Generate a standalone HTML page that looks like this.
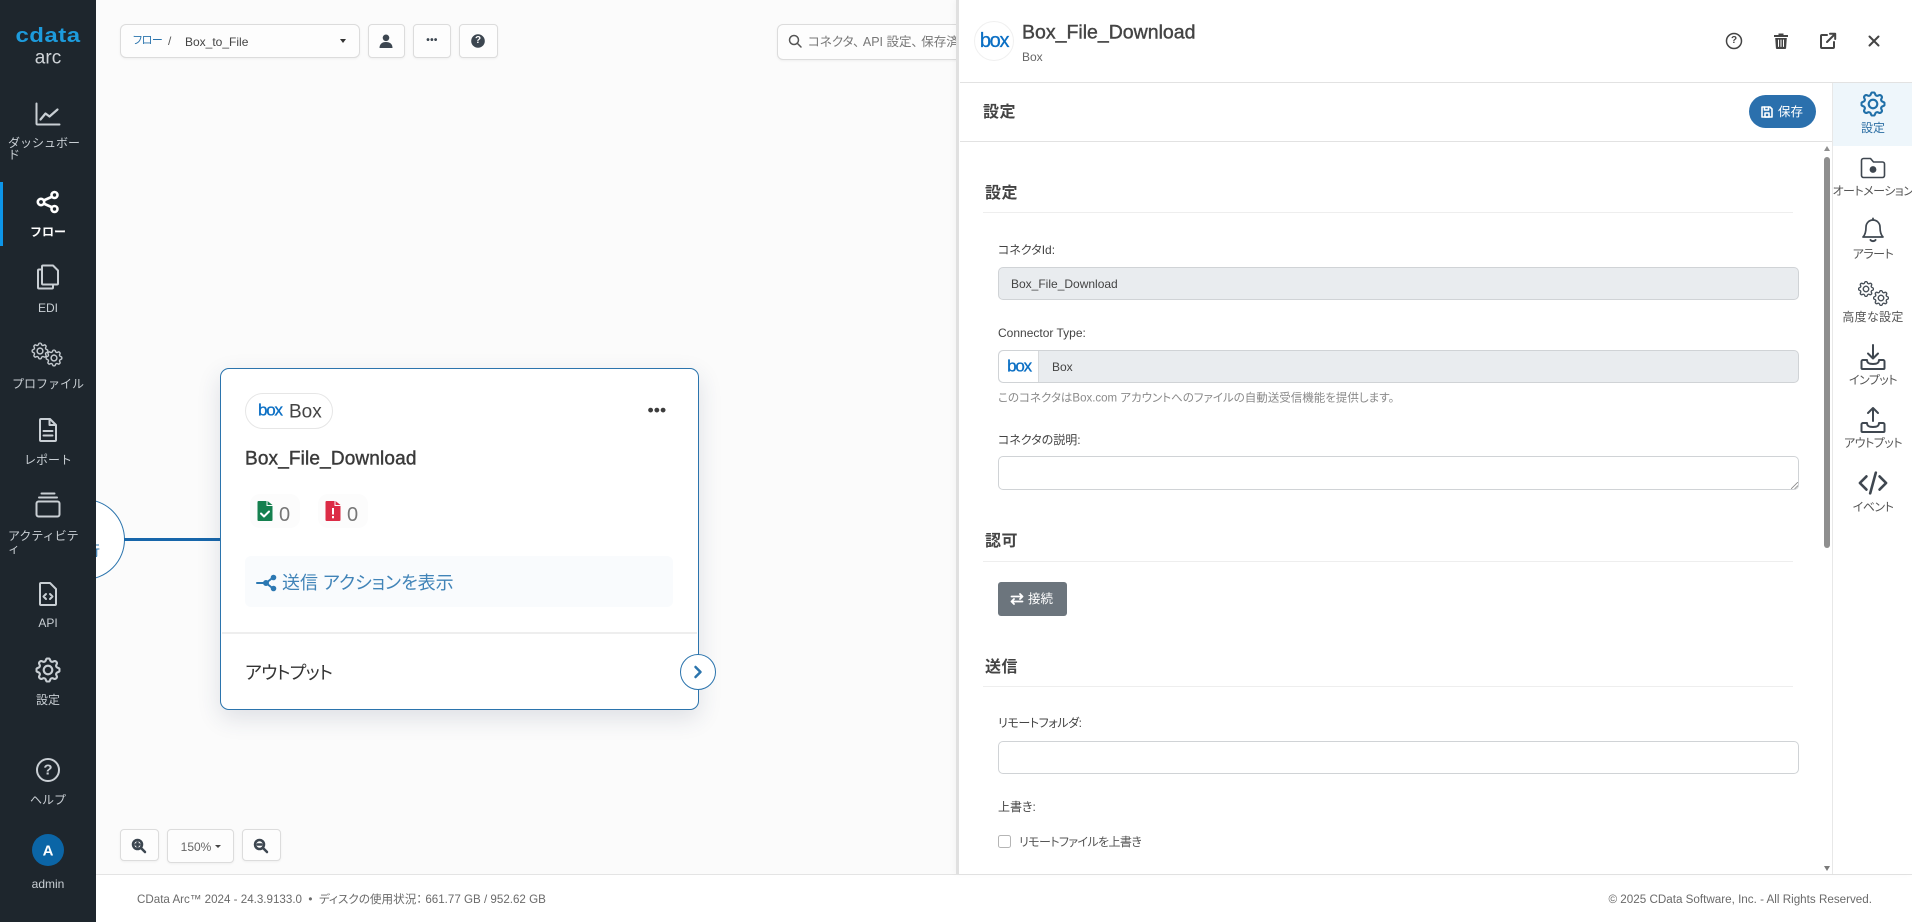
<!DOCTYPE html>
<html lang="ja"><head><meta charset="utf-8"><title>CData Arc</title>
<style>
html,body{margin:0;padding:0;width:1912px;height:922px;overflow:hidden;background:#fbfbfb;font-family:"Liberation Sans","Noto Sans CJK JP",sans-serif;color:#444;font-feature-settings:"palt"}
*{box-sizing:border-box}
.a{position:absolute}
.c{position:absolute;transform:translate(-50%,-50%);white-space:nowrap;line-height:1}
.l{position:absolute;transform:translateY(-50%);white-space:nowrap;line-height:1}
svg.i{position:absolute;transform:translate(-50%,-50%);fill:none;stroke:currentColor;stroke-width:1.5;stroke-linecap:round;stroke-linejoin:round;overflow:visible}
svg.f{fill:currentColor;stroke:none}
#side{left:0;top:0;width:96px;height:922px;background:#1e262d;color:#c9cfd4}
.t{font-size:12px;color:#c9cfd4;font-feature-settings:normal}
.btn{position:absolute;background:#fdfdfd;border:1px solid #dcdcdc;border-radius:4px;box-shadow:0 1px 2px rgba(0,0,0,.05)}
#card{left:220px;top:368px;width:479px;height:342px;background:#fff;border:1.500px solid #2b74ad;border-radius:9px;box-shadow:0 8px 24px rgba(40,60,90,.14)}
.box{font-family:"Liberation Sans",sans-serif;color:#0b6fc4;font-weight:400;letter-spacing:-1.200px;-webkit-text-stroke:.3px #0b6fc4}
.lab{font-size:12px;color:#444}
.sec{font-size:16px;font-weight:700;color:#444;letter-spacing:.5px;font-feature-settings:normal}
.ln{position:absolute;left:983px;width:810px;height:1px;background:#eeeeee}
.inp{position:absolute;left:998px;width:801px;border:1px solid #d0d3d6;border-radius:5px;background:#fff}
.nav{font-size:12px;color:#555;letter-spacing:-.5px}
</style></head><body>
<svg width="0" height="0" style="position:absolute">
<symbol id="gear" viewBox="0 0 16 16"><path fill="currentColor" stroke="currentColor" stroke-width=".35" d="M8 4.754a3.246 3.246 0 1 0 0 6.492 3.246 3.246 0 0 0 0-6.492zM5.754 8a2.246 2.246 0 1 1 4.492 0 2.246 2.246 0 0 1-4.492 0z"/><path fill="currentColor" stroke="currentColor" stroke-width=".35" d="M9.796 1.343c-.527-1.79-3.065-1.79-3.592 0l-.094.319a.873.873 0 0 1-1.255.52l-.292-.16c-1.64-.892-3.433.902-2.54 2.541l.159.292a.873.873 0 0 1-.52 1.255l-.319.094c-1.79.527-1.79 3.065 0 3.592l.319.094a.873.873 0 0 1 .52 1.255l-.16.292c-.892 1.64.901 3.434 2.541 2.54l.292-.159a.873.873 0 0 1 1.255.52l.094.319c.527 1.79 3.065 1.79 3.592 0l.094-.319a.873.873 0 0 1 1.255-.52l.292.16c1.64.893 3.434-.902 2.54-2.541l-.159-.292a.873.873 0 0 1 .52-1.255l.319-.094c1.79-.527 1.79-3.065 0-3.592l-.319-.094a.873.873 0 0 1-.52-1.255l.16-.292c.893-1.64-.902-3.433-2.541-2.54l-.292.159a.873.873 0 0 1-1.255-.52l-.094-.319zm-2.633.283c.246-.835 1.428-.835 1.674 0l.094.319a1.873 1.873 0 0 0 2.693 1.115l.291-.16c.764-.415 1.6.42 1.184 1.185l-.159.292a1.873 1.873 0 0 0 1.116 2.692l.318.094c.835.246.835 1.428 0 1.674l-.319.094a1.873 1.873 0 0 0-1.115 2.693l.16.291c.415.764-.42 1.6-1.185 1.184l-.291-.159a1.873 1.873 0 0 0-2.693 1.116l-.094.318c-.246.835-1.428.835-1.674 0l-.094-.319a1.873 1.873 0 0 0-2.692-1.115l-.292.16c-.764.415-1.6-.42-1.184-1.185l.159-.291A1.873 1.873 0 0 0 1.945 8.93l-.319-.094c-.835-.246-.835-1.428 0-1.674l.319-.094A1.873 1.873 0 0 0 3.06 4.377l-.16-.292c-.415-.764.42-1.6 1.185-1.184l.292.159a1.873 1.873 0 0 0 2.692-1.115l.094-.319z"/></symbol>
</svg>

<!-- Canvas -->
<div class="btn" style="left:120px;top:24px;width:240px;height:34px;border-radius:6px"></div>
<div class="l" style="left:133px;top:41px;font-size:11px;color:#2a74ad;letter-spacing:-.5px">フロー</div>
<div class="l" style="left:168px;top:41px;font-size:12px;color:#555">/</div>
<div class="l" style="left:185px;top:41.500px;font-size:12px;color:#444">Box_to_File</div>
<div class="a" style="left:340px;top:39px;width:0;height:0;border:3.500px solid transparent;border-top:4px solid #333;border-bottom:0"></div>
<div class="btn" style="left:368px;top:24px;width:37px;height:34px"></div>
<svg class="i f" style="left:386px;top:41px;color:#3c4650" width="13" height="14" viewBox="0 0 13 14"><circle cx="6.500" cy="3.800" r="3.300"/><path d="M0 14c0-4 2.500-6 6.500-6s6.500 2 6.500 6z"/></svg>
<div class="btn" style="left:413px;top:24px;width:38px;height:34px"></div>
<div class="c" style="left:432px;top:41px;font-size:10px;font-weight:700;color:#3c4650;letter-spacing:.3px">•••</div>
<div class="btn" style="left:459px;top:24px;width:39px;height:34px"></div>
<svg class="i f" style="left:478px;top:41px;color:#3c4650" width="14" height="14" viewBox="0 0 14 14"><circle cx="7" cy="7" r="6.800"/></svg>
<div class="c" style="left:478px;top:41px;font-size:10px;font-weight:700;color:#fff">?</div>
<div class="btn" style="left:777px;top:24px;width:200px;height:36px;border-radius:6px"></div>
<svg class="i" style="left:795px;top:41px;color:#555" width="13" height="13" viewBox="0 0 13 13"><circle cx="5.500" cy="5.500" r="4.500"/><path d="M9 9l3.500 3.500"/></svg>
<div class="l" style="left:808px;top:42px;font-size:12.500px;color:#777">コネクタ、 API 設定、 保存済み...</div>

<!-- Left partial circle + connector -->
<div class="a" style="left:44px;top:499px;width:81px;height:81px;border:1.500px solid #2b74ad;border-radius:50%;background:#fff"></div>
<div class="l" style="left:86px;top:551px;font-size:14px;color:#2b74ad">行</div>
<div class="a" style="left:124px;top:538px;width:97px;height:3px;background:#1766aa"></div>

<!-- Node card -->
<div id="card" class="a"></div>
<div class="a" style="left:245px;top:393px;width:88px;height:36px;border:1px solid #e6e6e6;border-radius:18px;background:#fff"></div>
<div class="l box" style="left:258px;top:410px;font-size:17px">box</div>
<div class="l" style="left:289px;top:412px;font-size:19px;color:#444">Box</div>
<div class="c" style="left:657px;top:410px;font-size:17px;font-weight:700;color:#3d3d3d;letter-spacing:.3px">•••</div>
<div class="l" style="left:245px;top:459px;font-size:19px;font-weight:400;color:#3a3a3a;letter-spacing:.15px;-webkit-text-stroke:.4px #3a3a3a">Box_File_Download</div>
<div class="a" style="left:250px;top:494px;width:50px;height:34px;background:#fcfcfc;border-radius:10px"></div>
<div class="a" style="left:318px;top:494px;width:50px;height:34px;background:#fcfcfc;border-radius:10px"></div>
<svg class="i f" style="left:264.500px;top:511px;color:#15804f" width="15" height="20" viewBox="0 0 15 20"><path d="M1 0h8v5h6v14a1 1 0 0 1-1 1H1a1 1 0 0 1-1-1V1a1 1 0 0 1 1-1zM10 0l5 4h-5z"/><path d="M3.500 12.500l3 3 5-5" fill="none" stroke="#fff" stroke-width="2"/></svg>
<div class="l" style="left:279px;top:515px;font-size:20px;color:#777">0</div>
<svg class="i f" style="left:332.500px;top:511px;color:#dc2c46" width="15" height="20" viewBox="0 0 15 20"><path d="M1 0h8v5h6v14a1 1 0 0 1-1 1H1a1 1 0 0 1-1-1V1a1 1 0 0 1 1-1zM10 0l5 4h-5z"/><path d="M6.500 7h2v6.500h-2zM6.500 15h2v2.300h-2z" fill="#fff"/></svg>
<div class="l" style="left:347px;top:515px;font-size:20px;color:#777">0</div>
<div class="a" style="left:245px;top:556px;width:428px;height:51px;background:#f9fbfd;border-radius:6px"></div>
<svg class="i" style="left:267px;top:583px;color:#2c78b2;stroke-width:2" width="20" height="16" viewBox="0 0 20 16"><path d="M0 8h9M9 8l7-5.500M9 8l7 5.500"/><circle cx="9" cy="8" r="2" fill="currentColor"/><circle cx="16.500" cy="2.500" r="1.800" fill="currentColor"/><circle cx="16.500" cy="13.500" r="1.800" fill="currentColor"/></svg>
<div class="l" style="left:282px;top:583px;font-size:18px;color:#4184b8">送信 アクションを表示</div>
<div class="a" style="left:222px;top:632px;width:475px;height:1.500px;background:#eeeeee"></div>
<div class="l" style="left:245px;top:673px;font-size:18px;color:#333;letter-spacing:-.7px">アウトプット</div>
<div class="a" style="left:680px;top:654px;width:36px;height:36px;border:1.500px solid #2b74ad;border-radius:50%;background:#fff"></div>
<svg class="i" style="left:698px;top:672px;color:#2b74ad;stroke-width:2.500" width="7" height="12" viewBox="0 0 7 12"><path d="M1 1l5 5-5 5"/></svg>

<!-- Zoom controls -->
<div class="btn" style="left:120px;top:829px;width:39px;height:32px"></div>
<svg class="i" style="left:139px;top:846px;color:#3c4650;stroke-width:2.500" width="14" height="14" viewBox="0 0 14 14"><circle cx="5.500" cy="5.500" r="4.500"/><path d="M9 9l4 4M3.500 5.500h4M5.500 3.500v4" /></svg>
<div class="btn" style="left:167px;top:829px;width:67px;height:34px"></div>
<div class="c" style="left:196px;top:846.500px;font-size:12px;color:#666">150%</div>
<div class="a" style="left:215px;top:845px;width:0;height:0;border:3px solid transparent;border-top:3.500px solid #444;border-bottom:0"></div>
<div class="btn" style="left:242px;top:829px;width:39px;height:32px"></div>
<svg class="i" style="left:261px;top:846px;color:#3c4650;stroke-width:2.500" width="14" height="14" viewBox="0 0 14 14"><circle cx="5.500" cy="5.500" r="4.500"/><path d="M9 9l4 4M3.500 5.500h4"/></svg>

<!-- Footer -->
<div class="a" style="left:96px;top:874px;width:1816px;height:48px;background:#fff;border-top:1px solid #e4e4e4"></div>
<div class="l" style="left:137px;top:899.500px;font-size:11.600px;color:#6a6a6a">CData Arc™ 2024 - 24.3.9133.0 &nbsp;•&nbsp; ディスクの使用状況： 661.77 GB / 952.62 GB</div>
<div class="l" style="right:40px;top:899.500px;font-size:11.650px;color:#6a6a6a">© 2025 CData Software, Inc. - All Rights Reserved.</div>

<!-- Side panel -->
<div class="a" style="left:956px;top:0;width:956px;height:874px;background:#fff;border-left:3px solid #e0e0e0;box-shadow:-2px 0 6px rgba(0,0,0,.03)"></div>
<div class="a" style="left:974px;top:21px;width:40px;height:40px;border-radius:50%;background:#fff;border:1px solid #f0f0f0"></div>
<div class="c box" style="left:994px;top:41px;font-size:20px;letter-spacing:-1.300px">box</div>
<div class="l" style="left:1022px;top:33px;font-size:19.500px;color:#444;-webkit-text-stroke:.4px #444">Box_File_Download</div>
<div class="l" style="left:1022px;top:57px;font-size:12px;color:#666">Box</div>
<svg class="i" style="left:1734px;top:41px;color:#444" width="16" height="16" viewBox="0 0 16 16"><circle cx="8" cy="8" r="7.500"/></svg>
<div class="c" style="left:1734px;top:41px;font-size:10px;font-weight:700;color:#444">?</div>
<svg class="i f" style="left:1781px;top:41px;color:#444" width="14" height="16" viewBox="0 0 14 16"><path d="M0 2h4.500V.5h5V2H14v2H0zM1.200 5h11.600l-.7 10a1 1 0 0 1-1 1H2.900a1 1 0 0 1-1-1z"/><path d="M4.500 7v6.500M7 7v6.500M9.500 7v6.500" fill="none" stroke="#fff" stroke-width="1"/></svg>
<svg class="i" style="left:1828px;top:41px;color:#444;stroke-width:2" width="16" height="16" viewBox="0 0 16 16"><path d="M7 2H2a1 1 0 0 0-1 1v11a1 1 0 0 0 1 1h11a1 1 0 0 0 1-1V9"/><path d="M7 9l8-8M10 .800h5.200V6"/></svg>
<svg class="i" style="left:1874px;top:41px;color:#444;stroke-width:2" width="10" height="10" viewBox="0 0 10 10"><path d="M.500.500l9 9M9.500.500l-9 9"/></svg>
<div class="a" style="left:960px;top:82px;width:952px;height:1px;background:#e2e2e2"></div>
<div class="a" style="left:960px;top:141px;width:872px;height:1px;background:#e2e2e2"></div>
<div class="l sec" style="left:983px;top:112.500px">設定</div>
<div class="a" style="left:1749px;top:95px;width:67px;height:33px;background:#2b70ad;border-radius:17px"></div>
<svg class="i" style="left:1767px;top:112px;color:#fff;stroke-width:1.600" width="12" height="12" viewBox="0 0 12 12"><path d="M1 1h8l2 2v8H1z"/><path d="M3.500 1v3h4V1M4 7h4v4H4z"/></svg>
<div class="l" style="left:1778px;top:112px;font-size:12.500px;color:#fff">保存</div>

<!-- Right nav -->
<div class="a" style="left:1832px;top:83px;width:1px;height:791px;background:#e8e8e8"></div>
<div class="a" style="left:1833px;top:83px;width:79px;height:63px;background:#eef6fb"></div>
<svg class="i" style="left:1873px;top:104px;color:#1f6fa8" width="25" height="25"><use href="#gear"/></svg>
<div class="c" style="left:1873px;top:128px;font-size:12px;color:#2c6ea3">設定</div>
<svg class="i" style="left:1873px;top:168px;color:#3f4750;stroke-width:1.600" width="25" height="21" viewBox="0 0 25 21"><path d="M1 3a2 2 0 0 1 2-2h7l3 3.500h9a2 2 0 0 1 2 2V18a2 2 0 0 1-2 2H3a2 2 0 0 1-2-2z"/><circle cx="12.500" cy="12" r="2.400" fill="currentColor" stroke-width="2"/></svg>
<div class="c nav" style="left:1873px;top:191px">オートメーション</div>
<svg class="i" style="left:1873px;top:230px;color:#3f4750;stroke-width:1.700" width="22" height="25" viewBox="0 0 22 25"><path d="M11 2.500a7 7 0 0 0-7 7c0 5-1.500 8.500-3 10h20c-1.500-1.500-3-5-3-10a7 7 0 0 0-7-7z"/><path d="M11 .800v1.700"/><path d="M8.500 22.500c1 1.500 4 1.500 5 0" stroke-width="2"/></svg>
<div class="c nav" style="left:1873px;top:254px">アラート</div>
<svg class="i" style="left:1866px;top:289px;color:#3f4750" width="16" height="16"><use href="#gear"/></svg>
<svg class="i" style="left:1881px;top:298px;color:#3f4750" width="16" height="16"><use href="#gear"/></svg>
<div class="c nav" style="left:1873px;top:317px;letter-spacing:.3px">高度な設定</div>
<svg class="i" style="left:1873px;top:357px;color:#3f4750;stroke-width:2" width="26" height="26" viewBox="0 0 26 26"><path d="M13 1v13M8 9.500l5 5 5-5"/><path d="M7 16H3a1.500 1.500 0 0 0-1.500 1.500V24a1 1 0 0 0 1 1h21a1 1 0 0 0 1-1v-6.500A1.500 1.500 0 0 0 23 16h-4M7 16c0 3 2 4 6 4s6-1 6-4"/></svg>
<div class="c nav" style="left:1873px;top:380px">インプット</div>
<svg class="i" style="left:1873px;top:420px;color:#3f4750;stroke-width:2" width="26" height="26" viewBox="0 0 26 26"><path d="M13 14V1M8 6l5-5 5 5"/><path d="M7 16H3a1.500 1.500 0 0 0-1.500 1.500V24a1 1 0 0 0 1 1h21a1 1 0 0 0 1-1v-6.500A1.500 1.500 0 0 0 23 16h-4M7 16c0 3 2 4 6 4s6-1 6-4"/></svg>
<div class="c nav" style="left:1873px;top:443px">アウトプット</div>
<svg class="i" style="left:1873px;top:483px;color:#3f4750;stroke-width:2.800" width="30" height="24" viewBox="0 0 32 24"><path d="M9 5L2 12l7 7M23 5l7 7-7 7M19 1l-6 22"/></svg>
<div class="c nav" style="left:1873px;top:507px">イベント</div>

<!-- Scrollbar -->
<div class="a" style="left:1824px;top:146px;width:0;height:0;border:3.500px solid transparent;border-bottom:5px solid #909090;border-top:0"></div>
<div class="a" style="left:1824px;top:157px;width:6px;height:391px;background:#8f8f8f;border-radius:3px"></div>
<div class="a" style="left:1824px;top:866px;width:0;height:0;border:3.500px solid transparent;border-top:5px solid #7a7a7a;border-bottom:0"></div>

<!-- Form -->
<div class="l sec" style="left:985px;top:194px">設定</div>
<div class="ln" style="top:212px"></div>
<div class="l lab" style="left:998px;top:250px">コネクタId:</div>
<div class="inp" style="top:267px;height:33px;background:#e9ecef"></div>
<div class="l" style="left:1011px;top:284px;font-size:12px;color:#444">Box_File_Download</div>
<div class="l lab" style="left:998px;top:333px">Connector Type:</div>
<div class="inp" style="top:350px;height:33px;background:#e9ecef"></div>
<div class="a" style="left:999px;top:351px;width:40px;height:31px;background:#fff;border-right:1px solid #d8dadc;border-radius:5px 0 0 5px"></div>
<div class="c box" style="left:1019px;top:366px;font-size:17px">box</div>
<div class="l" style="left:1052px;top:367px;font-size:12px;color:#444">Box</div>
<div class="l" style="left:998px;top:399px;font-size:11.500px;color:#8a8a8a">このコネクタはBox.com アカウントへのファイルの自動送受信機能を提供します。</div>
<div class="l lab" style="left:998px;top:440px">コネクタの説明:</div>
<div class="inp" style="top:456px;height:34px"></div>
<svg class="a" style="left:1791px;top:482px" width="7" height="7" viewBox="0 0 7 7" fill="none" stroke="#888" stroke-width=".8"><path d="M0 7l7-7M3.500 7L7 3.500"/></svg>
<div class="l sec" style="left:985px;top:542px">認可</div>
<div class="ln" style="top:561px"></div>
<div class="a" style="left:998px;top:582px;width:69px;height:34px;background:#6c757d;border-radius:3px"></div>
<svg class="i" style="left:1017px;top:599px;color:#fff;stroke-width:1.800" width="13" height="12" viewBox="0 0 13 12"><path d="M1 3.500h11M9.500 1L12 3.500 9.500 6M12 8.500H1M3.500 6L1 8.500 3.500 11"/></svg>
<div class="l" style="left:1028px;top:599px;font-size:12.500px;color:#fff">接続</div>
<div class="l sec" style="left:985px;top:668px">送信</div>
<div class="ln" style="top:686px"></div>
<div class="l lab" style="left:998px;top:723px;letter-spacing:-.4px">リモートフォルダ:</div>
<div class="inp" style="top:741px;height:33px"></div>
<div class="l lab" style="left:998px;top:807px">上書き:</div>
<div class="a" style="left:998px;top:835px;width:13px;height:13px;border:1px solid #b5b5b5;border-radius:2.500px;background:#fff"></div>
<div class="l lab" style="left:1019px;top:842px;color:#555;letter-spacing:-.6px">リモートファイルを上書き</div>

<!-- Sidebar (on top) -->
<div id="side" class="a"></div>
<div class="c" style="left:48px;top:36px;font-size:20px;font-weight:700;color:#1d9bdc;letter-spacing:.4px;transform:translate(-50%,-50%) scaleX(1.2)">cdata</div>
<div class="c" style="left:48px;top:58px;font-size:19px;color:#d0d4d8">arc</div>
<svg class="i" style="left:48px;top:114px;color:#c9cfd4;stroke-width:2" width="25" height="23" viewBox="0 0 25 23"><path d="M1 1v20a1 1 0 0 0 1 1h22"/><path d="M5 17l5-6 4 3 8-7" stroke-width="2.200"/></svg>
<div class="a t" style="left:8px;top:137px;width:75px;line-height:12px;word-break:break-all">ダッシュボード</div>

<div class="a" style="left:0;top:182px;width:3px;height:64px;background:#0d95e8"></div>
<svg class="i" style="left:48px;top:202px;color:#fff;stroke-width:2.600" width="23" height="23" viewBox="0 0 23 23"><path d="M7 10l9-4M7 13l9 4"/><circle cx="4.500" cy="11.500" r="3.200" fill="#1e262d"/><circle cx="18" cy="4.500" r="3" fill="#1e262d"/><circle cx="18" cy="18.500" r="3" fill="#1e262d"/></svg>
<div class="c t" style="left:48px;top:232px;font-weight:700;color:#fff">フロー</div>

<svg class="i" style="left:48px;top:277px;color:#c9cfd4;stroke-width:2" width="22" height="25" viewBox="0 0 22 25"><path d="M6 1h10l5 5v13a1 1 0 0 1-1 1H6a1 1 0 0 1-1-1V2a1 1 0 0 1 1-1z"/><path d="M5 5H2a1 1 0 0 0-1 1v17a1 1 0 0 0 1 1h13a1 1 0 0 0 1-1v-3"/></svg>
<div class="c t" style="left:48px;top:307.500px">EDI</div>

<svg class="i" style="left:40px;top:351px;color:#c9cfd4" width="17" height="17"><use href="#gear"/></svg>
<svg class="i" style="left:54px;top:358px;color:#c9cfd4" width="17" height="17"><use href="#gear"/></svg>
<div class="c t" style="left:48px;top:383.500px">プロファイル</div>

<svg class="i" style="left:48px;top:430px;color:#c9cfd4;stroke-width:2" width="18" height="24" viewBox="0 0 18 24"><path d="M2 1h9l6 6v15a1 1 0 0 1-1 1H2a1 1 0 0 1-1-1V2a1 1 0 0 1 1-1zM4.500 13h9M4.500 17.500h9"/><path d="M10.500 1v6h6"/></svg>
<div class="c t" style="left:48px;top:460px">レポート</div>

<svg class="i" style="left:48px;top:505px;color:#c9cfd4;stroke-width:2" width="25" height="25" viewBox="0 0 25 25"><rect x="1" y="9" width="23" height="15" rx="2"/><path d="M3.500 5h18M6 1h13"/></svg>
<div class="a t" style="left:8px;top:530px;width:75px;line-height:13px;word-break:break-all">アクティビティ</div>

<svg class="i" style="left:48px;top:594px;color:#c9cfd4;stroke-width:2" width="18" height="24" viewBox="0 0 18 24"><path d="M2 1h9l6 6v15a1 1 0 0 1-1 1H2a1 1 0 0 1-1-1V2a1 1 0 0 1 1-1z"/><path d="M7 12l-2.500 2.500L7 17M11 12l2.500 2.500L11 17"/></svg>
<div class="c t" style="left:48px;top:623px">API</div>

<svg class="i" style="left:48px;top:670px;color:#c9cfd4" width="25" height="25"><use href="#gear"/></svg>
<div class="c t" style="left:48px;top:699.500px">設定</div>

<svg class="i" style="left:48px;top:770px;color:#c9cfd4;stroke-width:2" width="24" height="24" viewBox="0 0 24 24"><circle cx="12" cy="12" r="11"/></svg>
<div class="c" style="left:48px;top:770px;font-size:15px;font-weight:700;color:#c9cfd4">?</div>
<div class="c t" style="left:48px;top:799.500px">ヘルプ</div>

<div class="a" style="left:32px;top:834px;width:32px;height:32px;border-radius:50%;background:#0b65a6"></div>
<div class="c" style="left:48px;top:850.500px;font-size:15px;font-weight:700;color:#fff">A</div>
<div class="c t" style="left:48px;top:883.500px">admin</div>
</body></html>
